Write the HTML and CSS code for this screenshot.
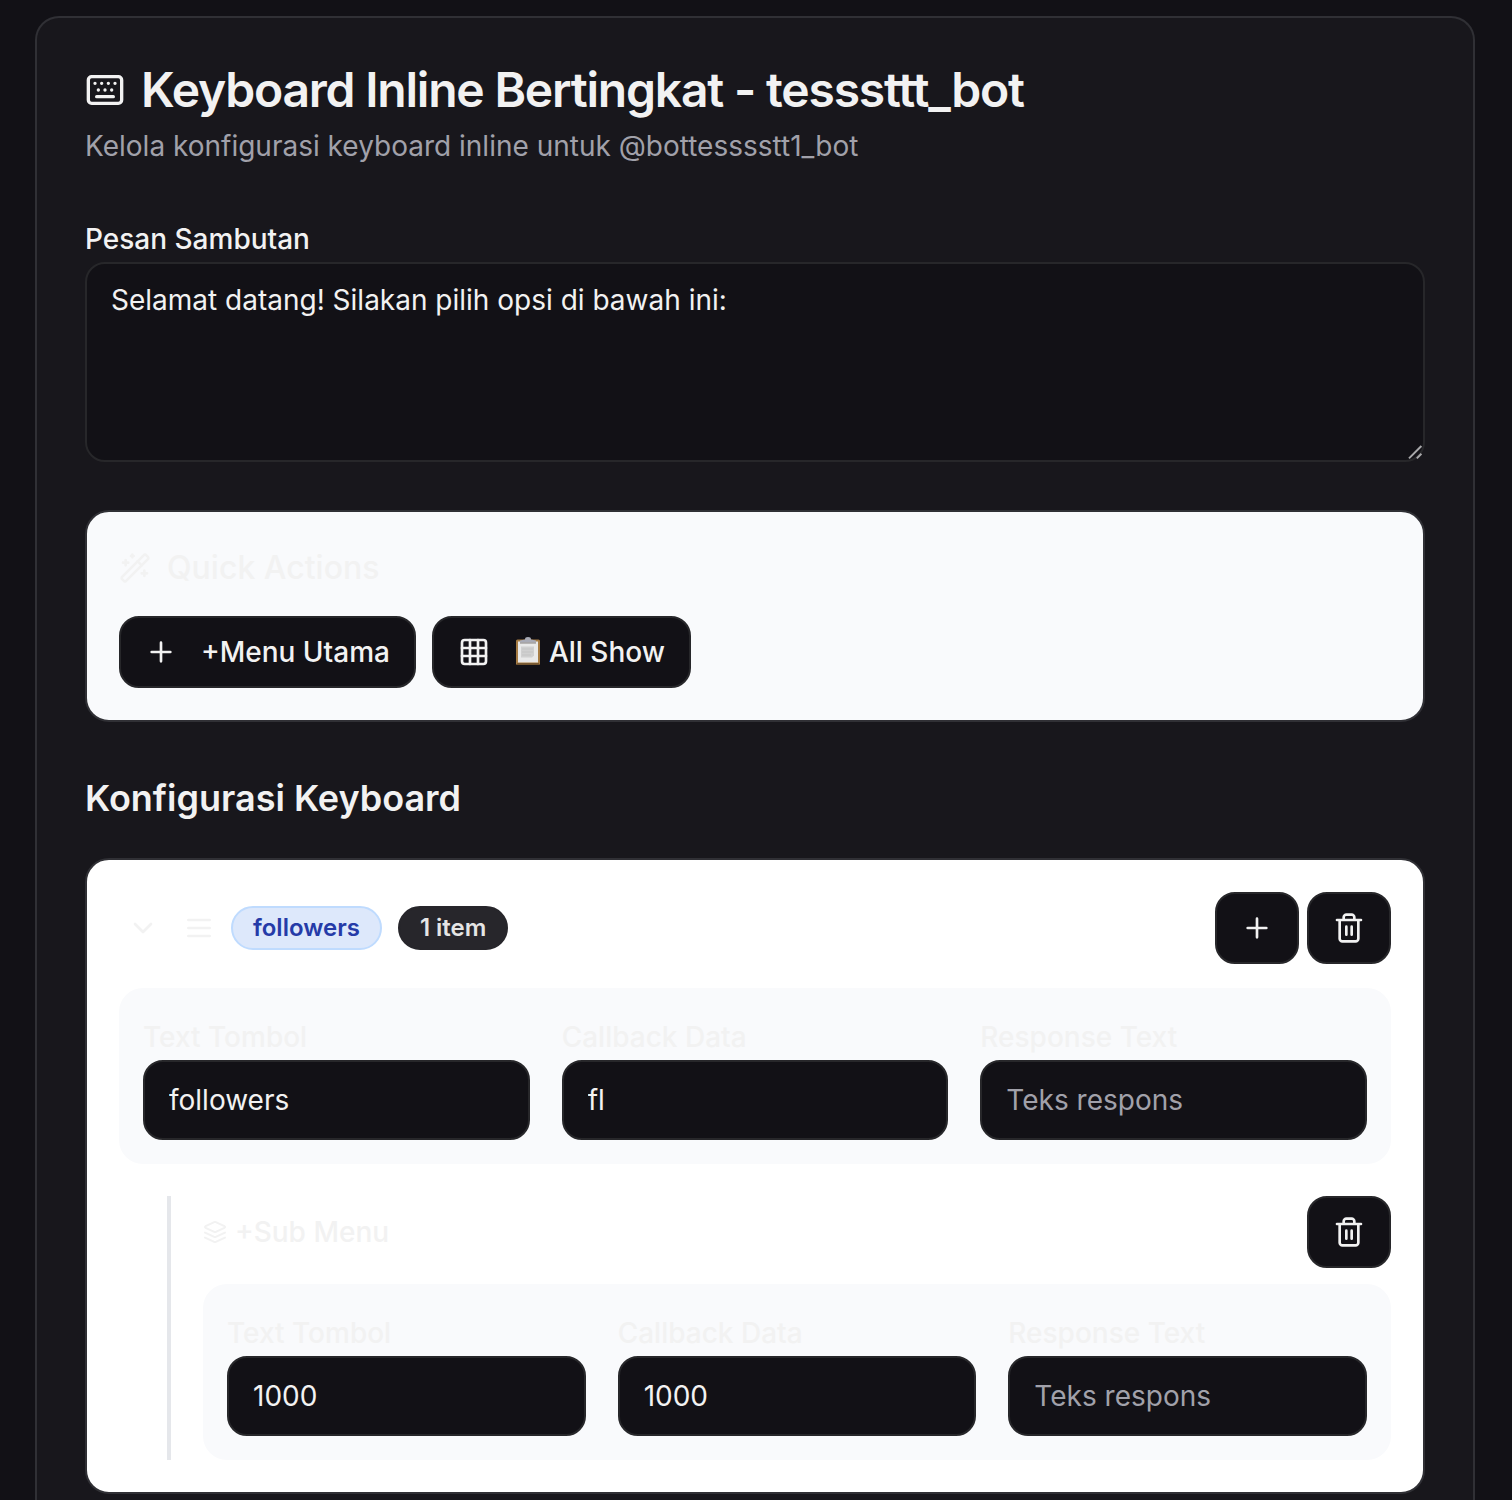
FILE: index.html
```html
<!DOCTYPE html>
<html lang="id">
<head>
<meta charset="utf-8">
<title>Keyboard Inline Bertingkat</title>
<link rel="stylesheet" href="styles.css">
</head>
<body>
<svg class="sprite" aria-hidden="true">
  <symbol id="keyboard" viewBox="0 0 24 24"><rect width="20" height="16" x="2" y="4" rx="2"/><path d="M10 8h.01M12 12h.01M14 8h.01M16 12h.01M18 8h.01M6 8h.01M7 16h10M8 12h.01"/></symbol>
  <symbol id="wand" viewBox="0 0 24 24"><path d="m21.64 3.64-1.28-1.28a1.21 1.21 0 0 0-1.72 0L2.36 18.64a1.21 1.21 0 0 0 0 1.72l1.28 1.28a1.2 1.2 0 0 0 1.72 0L21.64 5.36a1.2 1.2 0 0 0 0-1.72"/><path d="m14 7 3 3M5 6v4M19 14v4M10 2v2M7 8H3M21 16h-4M11 3H9"/></symbol>
  <symbol id="plus" viewBox="0 0 24 24"><path d="M5 12h14M12 5v14"/></symbol>
  <symbol id="grid" viewBox="0 0 24 24"><rect width="18" height="18" x="3" y="3" rx="2"/><path d="M3 9h18M3 15h18M9 3v18M15 3v18"/></symbol>
  <symbol id="chevron" viewBox="0 0 24 24"><path d="m6 9 6 6 6-6"/></symbol>
  <symbol id="menu" viewBox="0 0 24 24"><path d="M4 6h16M4 12h16M4 18h16"/></symbol>
  <symbol id="trash" viewBox="0 0 24 24"><path d="M3 6h18M19 6v14c0 1-1 2-2 2H7c-1 0-2-1-2-2V6M8 6V4c0-1 1-2 2-2h4c1 0 2 1 2 2v2M10 11v6M14 11v6"/></symbol>
  <symbol id="layers" viewBox="0 0 24 24"><path d="M12.83 2.18a2 2 0 0 0-1.66 0L2.6 6.08a1 1 0 0 0 0 1.83l8.58 3.91a2 2 0 0 0 1.66 0l8.58-3.9a1 1 0 0 0 0-1.83Z"/><path d="m22 17.65-9.17 4.16a2 2 0 0 1-1.66 0L2 17.65M22 12.65l-9.17 4.16a2 2 0 0 1-1.66 0L2 12.65"/></symbol>
</svg>
<main class="card">
  <header class="card-header">
    <h1 class="title"><svg class="icon icon-lg"><use href="#keyboard"/></svg><span>Keyboard Inline Bertingkat - tesssttt_bot</span></h1>
    <p class="description">Kelola konfigurasi keyboard inline untuk @bottesssstt1_bot</p>
  </header>

  <section class="field">
    <label class="label" for="welcome">Pesan Sambutan</label>
    <div class="textarea-wrap">
      <textarea class="textarea" id="welcome">Selamat datang! Silakan pilih opsi di bawah ini:</textarea>
      <svg class="grip" viewBox="0 0 16 16"><path d="M2 14.4 14.4 2M9.8 14.4l4.6-4.6"/></svg>
    </div>
  </section>

  <section class="panel quick">
    <h2 class="quick-title"><svg class="icon"><use href="#wand"/></svg><span>Quick Actions</span></h2>
    <div class="actions">
      <button class="button"><svg class="icon"><use href="#plus"/></svg><span>+Menu Utama</span></button>
      <button class="button"><svg class="icon"><use href="#grid"/></svg><span class="button-text"><svg class="clipboard" viewBox="0 0 28 32">
        <rect x="2" y="3.5" width="24" height="25.5" rx="1.5" fill="#a67c44"/>
        <path d="M3 27.4h22v1.3H3z" fill="#5d4528"/>
        <path d="M4 5.5h20v21H4z" fill="#e9e9e9"/>
        <path d="M7 10.5h13v9l-2 2H7z" fill="#d0d0d0"/>
        <path d="M8 13h11M8 16h11M8 19h9" stroke="#c4c4c4" stroke-width="1"/>
        <path d="M6 6.5v-2l5-1a3 2.4 0 0 1 6 0l5 1v2z" fill="#a9abb6"/>
        <path d="M6 6.5h16v1H6z" fill="#85817f"/>
      </svg> All Show</span></button>
    </div>
  </section>

  <h2 class="section-title">Konfigurasi Keyboard</h2>

  <section class="panel menu">
    <div class="row">
      <div class="row-main">
        <span class="toggle"><svg class="icon"><use href="#chevron"/></svg></span>
        <svg class="icon"><use href="#menu"/></svg>
        <span class="badge badge-blue">followers</span>
        <span class="badge badge-dark">1 item</span>
      </div>
      <div class="row-actions">
        <button class="button" aria-label="Tambah"><svg class="icon"><use href="#plus"/></svg></button>
        <button class="button" aria-label="Hapus"><svg class="icon"><use href="#trash"/></svg></button>
      </div>
    </div>
    <div class="fields">
      <div class="field"><label class="label" for="t1">Text Tombol</label><input class="input" id="t1" value="followers"></div>
      <div class="field"><label class="label" for="c1">Callback Data</label><input class="input" id="c1" value="fl"></div>
      <div class="field"><label class="label" for="r1">Response Text</label><input class="input" id="r1" placeholder="Teks respons"></div>
    </div>
    <div class="submenu">
      <div class="row">
        <div class="submenu-title"><svg class="icon icon-sm"><use href="#layers"/></svg><span>+Sub Menu</span></div>
        <button class="button" aria-label="Hapus"><svg class="icon"><use href="#trash"/></svg></button>
      </div>
      <div class="fields">
        <div class="field"><label class="label" for="t2">Text Tombol</label><input class="input" id="t2" value="1000"></div>
        <div class="field"><label class="label" for="c2">Callback Data</label><input class="input" id="c2" value="1000"></div>
        <div class="field"><label class="label" for="r2">Response Text</label><input class="input" id="r2" placeholder="Teks respons"></div>
      </div>
    </div>
  </section>
</main>
</body>
</html>
```
FILE: styles.css
```css
*, *::before, *::after { box-sizing: border-box; }

html { background: #121116; }

body {
  margin: 0;
  height: 1500px;
  padding: 16px 37px 0 35px;
  font-family: Inter, "Liberation Sans", sans-serif;
  font-size: 28px;
  line-height: 40px;
  color: #f2f2f2;
}

h1, h2, p { margin: 0; }

.sprite { display: none; }

.icon {
  display: block;
  flex: none;
  width: 32px;
  height: 32px;
  fill: none;
  stroke: currentColor;
  stroke-width: 2;
  stroke-linecap: round;
  stroke-linejoin: round;
}
.icon-lg { width: 40px; height: 40px; }
.icon-sm { width: 24px; height: 24px; }

.card {
  height: 1484px;
  padding: 48px 48px 0;
  border: 2px solid #303035;
  border-bottom: 0;
  border-radius: 24px 24px 0 0;
  background: #18171c;
}

.card-header { margin-bottom: 48px; }

.title {
  display: flex;
  align-items: center;
  gap: 16px;
  height: 48px;
  font-size: 48px;
  line-height: 48px;
  font-weight: 600;
  letter-spacing: -0.025em;
  white-space: nowrap;
}

.description { margin-top: 12px; color: #a1a1aa; }

.label {
  display: block;
  height: 48px;
  line-height: 50px;
  font-weight: 500;
}

.textarea-wrap { position: relative; }

.textarea, .input {
  display: block;
  width: 100%;
  border: 2px solid #27272a;
  border-radius: 20px;
  background: #121116;
  color: #f2f2f2;
  font: inherit;
  outline: none;
}
.textarea { height: 200px; padding: 16px 24px; resize: none; }
.input { height: 80px; padding: 0 24px; }
.input::placeholder { color: #a1a1aa; opacity: 1; }

.grip {
  position: absolute;
  right: 2px;
  bottom: 2px;
  width: 16px;
  height: 16px;
  fill: none;
  stroke: #a8a8aa;
  stroke-width: 2;
}

.panel {
  padding: 32px;
  border: 2px solid #303035;
  border-radius: 24px;
  background: #fff;
}

.quick { margin-top: 48px; background: #f9fafc; }

.quick-title {
  display: flex;
  align-items: center;
  gap: 16px;
  height: 48px;
  margin-bottom: 24px;
  font-size: 32px;
  font-weight: 500;
}

.actions { display: flex; gap: 16px; }

.button {
  display: flex;
  align-items: center;
  gap: 24px;
  height: 72px;
  padding: 0 24px;
  border: 2px solid #27272a;
  border-radius: 20px;
  background: #121116;
  color: #f2f2f2;
  font: inherit;
  font-weight: 500;
  white-space: nowrap;
}

.button-text { display: flex; align-items: center; gap: 7px; }
.clipboard { width: 28px; height: 32px; flex: none; }

.section-title {
  margin: 48px 0 32px;
  font-size: 36px;
  line-height: 56px;
  font-weight: 600;
}

.row { display: flex; align-items: center; justify-content: space-between; }
.row-main { display: flex; align-items: center; gap: 16px; }
.row-actions { display: flex; gap: 8px; }
.toggle { padding: 8px; }

.badge {
  padding: 4px 20px;
  border: 2px solid transparent;
  border-radius: 22px;
  font-size: 24px;
  line-height: 32px;
  font-weight: 600;
}
.badge-blue { background: #dde8fb; border-color: #bfdbfe; color: #253ba8; }
.badge-dark { background: #27262b; border-color: #27262b; color: #e5e5e5; }

.fields {
  display: grid;
  grid-template-columns: repeat(3, minmax(0, 1fr));
  gap: 32px;
  margin-top: 24px;
  padding: 24px;
  border-radius: 24px;
  background: #f9fafc;
}

.submenu {
  margin: 32px 0 0 48px;
  padding-left: 32px;
  border-left: 4px solid #e5e7eb;
}
.submenu .fields { margin-top: 16px; }
.submenu-title { display: flex; align-items: center; gap: 8px; font-weight: 500; }
```
